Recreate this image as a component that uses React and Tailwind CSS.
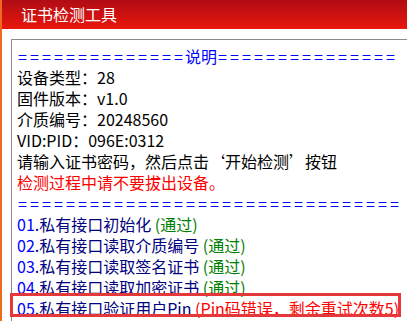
import React from "react";

function Sep({ count }) {
  return (
    <span>
      {Array.from({ length: count }, (_, i) => (
        <span key={i} className="inline-block w-[12px] pl-[1px]">
          =
        </span>
      ))}
    </span>
  );
}

function Step({ no, text, children }) {
  return (
    <div>
      <span className="text-[#0000ff]">{no}</span>
      <span className="text-[#000080]">.{text}</span> {children}
    </div>
  );
}

const Pass = () => <span className="text-[#008000]">(通过)</span>;

export default function App() {
  return (
    <div
      className="relative w-[407px] h-[321px] overflow-hidden bg-white flex flex-col border-l-2 border-[#ee6a1c] text-[16px] leading-[21px]"
      style={{ fontFamily: '"Noto Sans CJK SC", "Noto Sans", sans-serif' }}
    >
      <div className="h-[29px] shrink-0 bg-gradient-to-b from-[#b00c13] to-[#e9170a] text-white pl-[19px] flex items-center">
        证书检测工具
      </div>

      <div className="flex-1 pt-[10px] pl-[9px]">
        <div className="h-full border-t border-l border-[#8c8c8c] pl-[5px] pt-[6px] whitespace-nowrap text-black">
          <div className="text-[#0000ff]">
            <Sep count={14} />
            说明
            <Sep count={15} />
          </div>
          <div>设备类型：28</div>
          <div>固件版本：v1.0</div>
          <div>介质编号：20248560</div>
          <div>VID:PID：096E:0312</div>
          <div>请输入证书密码，然后点击‘开始检测’按钮</div>
          <div className="text-[#ff0000]">检测过程中请不要拔出设备。</div>
          <div className="text-[#0000ff]">
            <Sep count={32} />
          </div>
          <Step no="01" text="私有接口初始化">
            <Pass />
          </Step>
          <Step no="02" text="私有接口读取介质编号">
            <Pass />
          </Step>
          <Step no="03" text="私有接口读取签名证书">
            <Pass />
          </Step>
          <Step no="04" text="私有接口读取加密证书">
            <Pass />
          </Step>
          <Step no="05" text="私有接口验证用户Pin">
            <span className="text-[#ff0000]">(Pin码错误，剩余重试次数5)</span>
          </Step>
        </div>
      </div>

      {/* highlight on the failed step */}
      <div className="absolute left-[8px] top-[293px] w-[391px] h-[24px] border-[3px] border-[#e5383b] pointer-events-none" />
    </div>
  );
}
